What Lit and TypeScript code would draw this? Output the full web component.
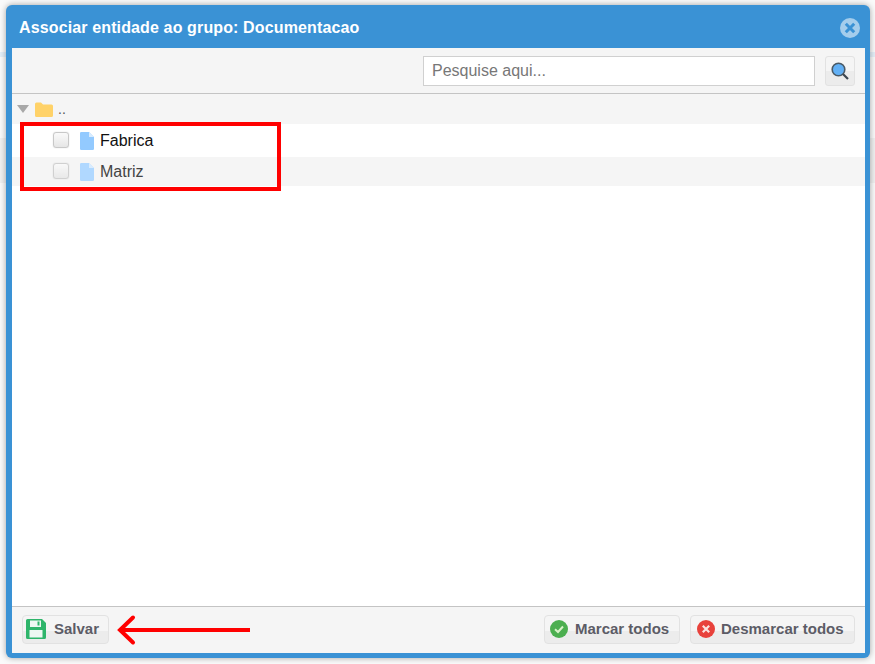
import { LitElement, html, css, svg } from "lit";
import { customElement } from "lit/decorators.js";

const fileIcon = svg`<svg class="fi" width="14" height="18" viewBox="0 0 14 18"><path d="M1.2 0H9L14 5V16.8A1.2 1.2 0 0 1 12.8 18H1.2A1.2 1.2 0 0 1 0 16.8V1.2A1.2 1.2 0 0 1 1.2 0Z" fill="currentColor"/><path d="M9 0L14 5H9Z" fill="#d8ecff"/></svg>`;

@customElement("app-root")
export class AppRoot extends LitElement {
  static styles = css`
    :host { display: block; width: 875px; height: 664px; background: #fff; font-family: "Liberation Sans", Arial, sans-serif; position: relative; overflow: hidden; }
    .page { height: 664px; box-sizing: border-box; padding: 5px 5px 6px 6px; background: linear-gradient(#fafafa 52px, #e4eff8 52px, #e4eff8 57px, #fafafa 57px, #fafafa 138px, #f0f0f0 138px, #f0f0f0 183px, #fafafa 183px); }
    .dialog { height: 653px; box-sizing: border-box; background: #3a92d5; border-radius: 6px; padding: 0 5px 5px 6px; display: flex; flex-direction: column; box-shadow: 0 0 6px rgba(0,0,0,.35); }
    .head { height: 43px; flex: none; box-sizing: border-box; display: flex; align-items: center; justify-content: space-between; padding: 3px 5px 0 7px; color: #fff; font-weight: 700; font-size: 16px; letter-spacing: .13px; }
    .close { display: block; }
    .body { flex: 1; background: #fff; display: flex; flex-direction: column; min-height: 0; }
    .toolbar { height: 45px; flex: none; background: #f5f5f5; border-bottom: 1px solid #c4c4c4; display: flex; align-items: center; justify-content: flex-end; gap: 10px; padding: 0 10px 0 0; }
    .search { height: 28px; border: 1px solid #d0d0d0; background: #fff; color: #777; font-size: 16px; line-height: 28px; padding: 0 0 0 8px; width: 382px; }
    .sbtn { width: 28px; height: 28px; border: 1px solid #e2e2e2; border-radius: 3px; background: linear-gradient(#f5f5f5 50%, #ececec 50%); display: flex; align-items: center; justify-content: center; }
    .root { height: 30px; flex: none; background: #f5f5f5; display: flex; align-items: center; padding-left: 5px; font-size: 14px; color: #555; }
    .tri { width: 0; height: 0; border-left: 6px solid transparent; border-right: 6px solid transparent; border-top: 8px solid #a8a8a8; margin-right: 6px; }
    .root span { margin-left: 5px; }
    .row { flex: none; display: flex; align-items: center; padding-left: 41px; font-size: 16px; }
    .r1 { height: 33px; background: #fff; color: #111; }
    .r2 { height: 29px; background: #f5f5f5; color: #444; }
    .cb { width: 14px; height: 14px; border: 1px solid #c8c8c8; border-radius: 3px; background: linear-gradient(#fafafa, #e6e6e6); box-shadow: 0 0 1px rgba(0,0,0,.25); margin: -2px 11px 0 0; }
    .r2 .cb { opacity: .8; }
    .fi { display: block; margin: 1px 6px 0 0; }
    .r1 .fi { color: #93caff; }
    .r2 .fi { color: #b0d8ff; }
    .fill { flex: 1; background: #fff; }
    .foot { flex: none; background: #f5f5f5; border-top: 1px solid #c4c4c4; display: flex; align-items: center; padding: 0 10px 1px; height: 45px; gap: 10px; }
    .btn { height: 29px; box-sizing: border-box; border: 1px solid #e2e2e2; border-radius: 4px; background: linear-gradient(#f5f5f5 55%, #ececec 55%); display: flex; align-items: center; color: #5c5c66; font-weight: 700; font-size: 15px; padding-bottom: 1px; }
    .btn span { margin-bottom: 2px; }
    .save { width: 87px; padding-left: 3px; gap: 8px; }
    .mark { width: 136px; padding-left: 5px; gap: 7px; margin-left: auto; }
    .unmark { width: 165px; padding-left: 6px; gap: 6px; }
    .redbox { position: absolute; left: 20px; top: 122px; width: 253px; height: 61px; border: 4px solid #f00; }
    .arrow { position: absolute; left: 115px; top: 612px; display: block; }
  `;
  render() {
    return html`<div class="page">
      <div class="dialog">
        <div class="head">Associar entidade ao grupo: Documentacao
          <svg class="close" width="20" height="20" viewBox="0 0 20 20"><circle cx="10" cy="10" r="10" fill="#a4cdec"/><path d="M5.8 5.8L14.2 14.2M14.2 5.8L5.8 14.2" stroke="#3a92d5" stroke-width="3"/></svg>
        </div>
        <div class="body">
          <div class="toolbar">
            <div class="search">Pesquise aqui...</div>
            <div class="sbtn"><svg width="20" height="20" viewBox="0 0 20 20"><circle cx="8.5" cy="8.5" r="6.3" fill="#62b0f5" stroke="#4a5a66" stroke-width="1.6"/><path d="M13 13L18 18" stroke="#3c4650" stroke-width="2.2"/></svg></div>
          </div>
          <div class="root"><i class="tri"></i>
            <svg width="18" height="15" viewBox="0 0 18 15"><path d="M0 2A1.5 1.5 0 0 1 1.5 .5H6L8 2.5H16.5A1.5 1.5 0 0 1 18 4V13.5A1.5 1.5 0 0 1 16.5 15H1.5A1.5 1.5 0 0 1 0 13.5Z" fill="#ffd268"/></svg>
            <span>..</span></div>
          <div class="row r1"><i class="cb"></i>${fileIcon}Fabrica</div>
          <div class="row r2"><i class="cb"></i>${fileIcon}Matriz</div>
          <div class="fill"></div>
          <div class="foot">
            <div class="btn save"><svg width="20" height="20" viewBox="0 0 20 20"><path d="M0 1.5A1.5 1.5 0 0 1 1.5 0H16L20 4V18.5A1.5 1.5 0 0 1 18.5 20H1.5A1.5 1.5 0 0 1 0 18.5Z" fill="#2fb56b"/><rect x="4" y="1.5" width="11" height="6.5" fill="#eef8f2"/><rect x="11.5" y="2.5" width="2" height="4" fill="#2fb56b"/><rect x="3.5" y="11" width="13" height="7.5" fill="#eef8f2"/></svg><span>Salvar</span></div>
            <div class="btn mark"><svg width="18" height="18" viewBox="0 0 18 18"><circle cx="9" cy="9" r="9" fill="#4caf50"/><path d="M5 9.3L8 12L13 6.5" fill="none" stroke="#d8f2c8" stroke-width="2"/></svg><span>Marcar todos</span></div>
            <div class="btn unmark"><svg width="18" height="18" viewBox="0 0 18 18"><circle cx="9" cy="9" r="9" fill="#e8423c"/><path d="M5.8 5.8L12.2 12.2M12.2 5.8L5.8 12.2" stroke="#fbe3e0" stroke-width="2.2"/></svg><span>Desmarcar todos</span></div>
          </div>
        </div>
      </div>
    </div>
    <div class="redbox"></div>
    <svg class="arrow" width="140" height="36" viewBox="0 0 140 36"><path d="M135 18H6" fill="none" stroke="#f00" stroke-width="4"/><path d="M18 5.5L5 18L18 30.5" fill="none" stroke="#f00" stroke-width="4" stroke-linecap="round"/></svg>`;
  }
}
